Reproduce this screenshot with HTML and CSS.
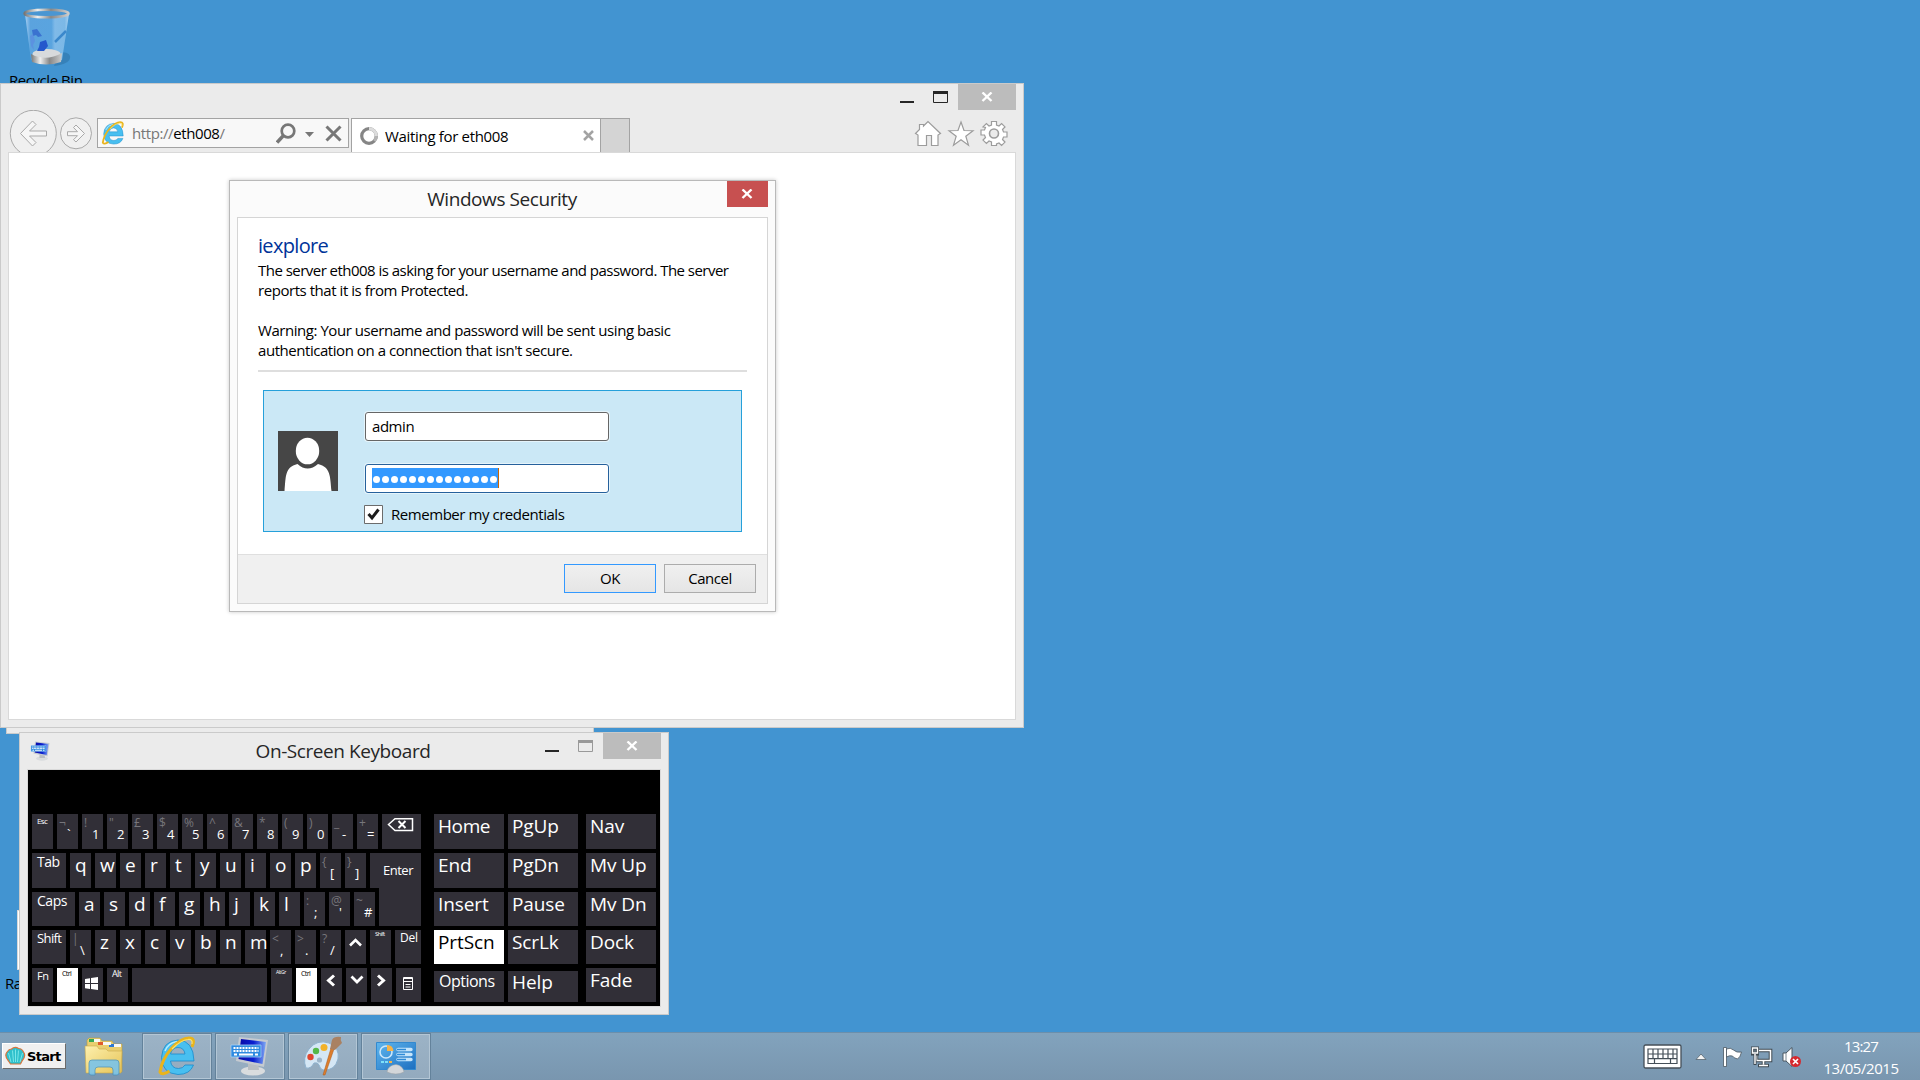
FILE: index.html
```html
<!DOCTYPE html>
<html lang="en">
<head>
<meta charset="utf-8">
<title>Desktop</title>
<link rel="stylesheet" href="styles.css">
</head>
<body>
<main class="desktop">

  <div class="shortcut recycle">
    <svg width="52" height="62" viewBox="0 0 52 62">
      <defs>
        <linearGradient id="rim" x1="0" x2="1"><stop offset="0" stop-color="#777"/><stop offset=".3" stop-color="#eee"/><stop offset=".6" stop-color="#888"/><stop offset="1" stop-color="#ccc"/></linearGradient>
        <linearGradient id="glass" x1="0" x2="1"><stop offset="0" stop-color="#a9d0f2"/><stop offset=".12" stop-color="#5ba3de"/><stop offset=".6" stop-color="#5aa4df"/><stop offset=".68" stop-color="#80bae8"/><stop offset=".9" stop-color="#7bb8e6"/><stop offset="1" stop-color="#a9d2f2"/></linearGradient>
      </defs>
      <path d="M37 47q12 0 11 6t-16 8z" fill="#2f74a8" opacity=".6"/>
      <path d="M3 9l6 46q15 7 31 0L47 9z" fill="url(#glass)"/>
      <ellipse cx="24.500" cy="49" rx="14" ry="5" fill="#d8dadc"/>
      <path d="M9 49q15 8 31-1l-1 9q-15 5-29 0z" fill="url(#rim)"/>
      <path d="M10 25l5-1 5 7-4 1-2-2-3 1z" fill="#3a72d0"/>
      <path d="M8 31l3-2 2 7-2 4 1 5-3-4z" fill="#5b8de0" opacity=".8"/>
      <path d="M18 37l6-2 2 6-4 5h-7l2-4z" fill="#2458cc"/>
      <path d="M33 37l11-11" stroke="#3b88cc" stroke-width="2.500"/>
      <ellipse cx="24.500" cy="8.500" rx="22" ry="3.800" fill="#4a96d2" stroke="url(#rim)" stroke-width="2.500"/>
    </svg>
    <span>Recycle Bin</span>
  </div>

  <div class="shortcut second"><i></i><span>Ra</span></div>

  <div class="window backdrop"></div>

  <section class="window ie">
    <header class="caption">
      <svg class="cap-btn" width="58" height="26"><path d="M7 17h14v2H7z" fill="#262626"/></svg>
      <svg class="cap-max" width="22" height="26"><path d="M.5 7.500h14v11H.5z" fill="none" stroke="#262626"/><path d="M0 7h15v3H0z" fill="#262626"/></svg>
      <div class="close"><svg width="12" height="10"><path d="M1.500.5l9 8.500M10.500.5l-9 8.500" stroke="#fff" stroke-width="2.400"/></svg></div>
    </header>
    <nav class="toolbar">
      <svg class="nav" width="88" height="42" fill="#f0f0f0" stroke="#a9a9a9">
        <circle cx="25.300" cy="23.300" r="23"/>
        <circle cx="68" cy="23.300" r="15.500"/>
        <path d="M12.500 23.500L24.500 11l3.500 3.500-6.500 6.500H38.500v5H21.500l6.500 6.500-3.500 3.500z" fill="#f6f6f6"/>
        <path d="M76.500 23.500L68 15l-2.500 2.500 4 4.200H59.500v4H69.500l-4 4L68 32z" fill="#f6f6f6"/>
      </svg>
      <div class="address">
        <svg width="24" height="26" viewBox="0 0 40 40" class="e-small"><use href="#ie-logo"/></svg>
        <span class="url">http://<b>eth008</b>/</span>
        <svg width="70" height="28" class="addr-icons">
          <circle cx="12" cy="12" r="6.300" fill="none" stroke="#777" stroke-width="2.700"/>
          <path d="M7.500 16.500L1 23.500" stroke="#777" stroke-width="3.400"/>
          <path d="M29 13h9l-4.500 5z" fill="#777"/>
          <path d="M50.500 7.500l14 14M64.500 7.500l-14 14" stroke="#777" stroke-width="3"/>
        </svg>
      </div>
      <div class="tab">
        <svg width="18" height="18" fill="none" stroke-width="3.200"><circle cx="9" cy="9" r="7.300" stroke="#858585"/><path d="M9 1.700A7.300 7.300 0 0 1 16.300 9" stroke="#dcdcdc"/><path d="M16.300 9a7.300 7.300 0 0 1-2 5" stroke="#b4b4b4"/></svg>
        <span>Waiting for eth008</span>
        <svg width="11" height="11"><path d="M1 1l9 9M10 1l-9 9" stroke="#a3a3a3" stroke-width="2.500"/></svg>
      </div>
      <div class="newtab"></div>
      <svg class="tools" width="94" height="28" fill="#fff" stroke="#9c9c9c" stroke-width="1.200">
        <path d="M1.500 13.500L5.500 9.500V4.500h4v1.500L14 1.500l12.500 12-2.500 1.500V25.500H17.500V15.500h-5v10H4V15z"/>
        <path d="M47 2l3 8.500 9 .2-7.200 5.500 2.700 9L47 19.800l-7.500 5.400 2.700-9L35 10.700l9-.2z"/>
        <path d="M77.500 2h5v3.500l2.500 1 2.600-2.500 3.400 3.400-2.500 2.600 1 2.500H93v5h-3.500l-1 2.500 2.500 2.600-3.400 3.400-2.600-2.500-2.500 1V26h-5v-3.500l-2.500-1-2.600 2.500-3.400-3.400 2.500-2.600-1-2.500H67v-5h3.500l1-2.500L69 7.400 72.400 4 75 6.500l2.500-1z" transform="translate(0 -.5)"/>
        <circle cx="80" cy="13.500" r="4.500" fill="#ebebeb" stroke-width="1.600"/>
      </svg>
    </nav>
    <div class="page"></div>
  </section>

  <section class="window dialog">
    <header class="dialog-head">
      <h1>Windows Security</h1>
      <div class="close red"><svg width="12" height="10"><path d="M1.500.5l9 8.500M10.500.5l-9 8.500" stroke="#fff" stroke-width="2.400"/></svg></div>
    </header>
    <div class="panel">
      <div class="panel-body">
        <h2>iexplore</h2>
        <p class="wide">The server eth008 is asking for your username and password. The server</p>
        <p>reports that it is from Protected.</p>
        <p class="gap">Warning: Your username and password will be sent using basic</p>
        <p>authentication on a connection that isn't secure.</p>
        <div class="rule"></div>
        <div class="card">
          <svg class="avatar" width="60" height="60"><rect width="60" height="60" fill="#464646"/><ellipse cx="29.500" cy="20" rx="11.700" ry="13.300" fill="#fff"/><path d="M6.500 60C8 46 6.500 36 19.500 33q10 9 20.500 0C53 36 52 46 53.500 60z" fill="#fff"/></svg>
          <div class="fields">
            <div class="input">admin</div>
            <div class="input active"><div class="selected"><i></i><i></i><i></i><i></i><i></i><i></i><i></i><i></i><i></i><i></i><i></i><i></i><i></i><i></i></div></div>
            <div class="remember">
              <svg width="19" height="19"><path d="M.5.5h18v18H.5z" fill="#fff" stroke="#6c6c6c"/><path d="M4.500 9l3.500 4 6.500-8.500" fill="none" stroke="#1c1c1c" stroke-width="3"/></svg>
              <span>Remember my credentials</span>
            </div>
          </div>
        </div>
      </div>
      <footer class="panel-foot">
        <div class="button primary">OK</div>
        <div class="button">Cancel</div>
      </footer>
    </div>
  </section>

  <section class="window osk">
    <header class="osk-head">
      <svg class="osk-icon" width="20" height="20" viewBox="0 0 40 40"><use href="#osk-logo"/></svg>
      <h1>On-Screen Keyboard</h1>
      <div class="osk-caps">
        <svg width="58" height="26"><path d="M0 17h14v2H0z" fill="#262626"/><path d="M33.500 7.500h14v11h-14z" fill="none" stroke="#999"/><path d="M33 7h15v3H33z" fill="#999"/></svg>
        <div class="close"><svg width="12" height="10"><path d="M1.500.5l9 8.500M10.500.5l-9 8.500" stroke="#fff" stroke-width="2.400"/></svg></div>
      </div>
    </header>
    <div class="board">
      <div class="keys">
        <div class="row">
          <div class="key esc">Esc</div>
          <div class="key dual"><s>¬</s><u>`</u></div>
          <div class="key dual"><s>!</s><u>1</u></div>
          <div class="key dual"><s>"</s><u>2</u></div>
          <div class="key dual"><s>£</s><u>3</u></div>
          <div class="key dual"><s>$</s><u>4</u></div>
          <div class="key dual"><s>%</s><u>5</u></div>
          <div class="key dual"><s>^</s><u>6</u></div>
          <div class="key dual"><s>&amp;</s><u>7</u></div>
          <div class="key dual"><s>*</s><u>8</u></div>
          <div class="key dual"><s>(</s><u>9</u></div>
          <div class="key dual"><s>)</s><u>0</u></div>
          <div class="key dual"><s>_</s><u>-</u></div>
          <div class="key dual"><s>+</s><u>=</u></div>
          <div class="key art backspace"><svg width="39" height="35" fill="none" stroke="#fff"><path d="M6.500 10.500L13 4.700H30.500v11.800H13z" stroke-width="1.500"/><path d="M16.500 7l7 7M23.500 7l-7 7" stroke-width="2"/></svg></div>
        </div>
        <div class="row">
          <div class="key mod tab-key">Tab</div>
          <div class="key">q</div><div class="key">w</div><div class="key">e</div><div class="key">r</div><div class="key">t</div><div class="key">y</div><div class="key">u</div><div class="key">i</div><div class="key">o</div><div class="key">p</div>
          <div class="key dual"><s>{</s><u>[</u></div>
          <div class="key dual"><s>}</s><u>]</u></div>
          <div class="key enter">Enter</div>
        </div>
        <div class="row low">
          <div class="key mod caps-key">Caps</div>
          <div class="key">a</div><div class="key">s</div><div class="key">d</div><div class="key">f</div><div class="key">g</div><div class="key">h</div><div class="key">j</div><div class="key">k</div><div class="key">l</div>
          <div class="key dual"><s>:</s><u>;</u></div>
          <div class="key dual"><s>@</s><u>'</u></div>
          <div class="key dual"><s>~</s><u>#</u></div>
        </div>
        <div class="row low">
          <div class="key mod shift-key">Shift</div>
          <div class="key dual"><s>|</s><u>\</u></div>
          <div class="key">z</div><div class="key">x</div><div class="key">c</div><div class="key">v</div><div class="key">b</div><div class="key">n</div><div class="key m">m</div>
          <div class="key dual"><s>&lt;</s><u>,</u></div>
          <div class="key dual"><s>&gt;</s><u>.</u></div>
          <div class="key dual"><s>?</s><u>/</u></div>
          <div class="key art"><svg width="21" height="34"><path d="M5 15.500l5.500-5.500 5.500 5.500" fill="none" stroke="#fff" stroke-width="2.600"/></svg></div>
          <div class="key rshift">Shift</div>
          <div class="key mod del">Del</div>
        </div>
        <div class="row low">
          <div class="key fn">Fn</div>
          <div class="key ctrl">Ctrl</div>
          <div class="key art"><svg width="21" height="34" fill="#fff"><path d="M3 11l5-.8V15H3zM9 10l7-1v6H9zM3 16h5v5l-5-.8zM9 16h7v6l-7-1z"/></svg></div>
          <div class="key alt">Alt</div>
          <div class="key space"></div>
          <div class="key altgr">AltGr</div>
          <div class="key ctrl">Ctrl</div>
          <div class="key art"><svg width="21" height="34"><path d="M13 7.500l-5.500 5 5.500 5" fill="none" stroke="#fff" stroke-width="3"/></svg></div>
          <div class="key art"><svg width="21" height="34"><path d="M5.500 8.500L11 14l5.500-5.500" fill="none" stroke="#fff" stroke-width="2.800"/></svg></div>
          <div class="key art"><svg width="21" height="34"><path d="M7 7.500l5.500 5-5.500 5" fill="none" stroke="#fff" stroke-width="3"/></svg></div>
          <div class="key art menu-key"><svg width="25" height="34" fill="none" stroke="#fff"><path d="M7.500 9.500h9v12h-9z"/><path d="M7 10.500h10M7 13.500h10M9.500 16.500h5M9.500 19h5"/></svg></div>
        </div>
      </div>
      <div class="side">
        <div class="key home">Home</div><div class="key">PgUp</div><div class="key">Nav</div>
        <div class="key">End</div><div class="key">PgDn</div><div class="key">Mv Up</div>
        <div class="key">Insert</div><div class="key">Pause</div><div class="key">Mv Dn</div>
        <div class="key lit">PrtScn</div><div class="key">ScrLk</div><div class="key">Dock</div>
        <div class="key short opt">Options</div><div class="key short">Help</div><div class="key">Fade</div>
      </div>
    </div>
  </section>
</main>

<footer class="taskbar">
  <div class="start">
    <svg width="21" height="20"><path d="M3.500 15Q-1 10 2 6 4 3 6.500 3 10 0 13.500 2.500 17 2.500 18.500 6q3 4-1.500 9l-1.500 3h-10z" fill="#2fc0cc" stroke="#d9743c" stroke-width="1.200"/><path d="M6 16L3.500 7M8.500 16L7.500 4.500M10.500 16V3.500M12.500 16l1-11.500M15 16l2.500-9" stroke="#7be6e8" stroke-width="1"/></svg>
    <span>Start</span>
  </div>
  <div class="pinned">
    <svg width="40" height="40">
      <defs><linearGradient id="fold" x1="0" y1="0" x2="1" y2="1"><stop offset="0" stop-color="#fdf0ae"/><stop offset="1" stop-color="#e6c457"/></linearGradient></defs>
      <path d="M3 12V3l2-2h11l2 3h10l2 3h8v28H3z" fill="#e9cf70" stroke="#b99a3f" stroke-width=".6"/>
      <path d="M5 2h5v3H5z" fill="#34a853"/><path d="M14 5h5v3h-5z" fill="#e05a2b"/><path d="M25 7h5v3h-5z" fill="#2b78d4"/><path d="M10 2h6v3h-6zM19 5h8v3h-8zM30 7h7v3h-7z" fill="#f8f8f4"/>
      <path d="M1 9h12l2 3h7l2 2h14l-1 22H2z" fill="url(#fold)" stroke="#c9a94c" stroke-width=".6"/>
      <path d="M5 26q0-3 3-3h24q3 0 3 3v10q0 2-2 2h-4v-5q0-3-3-3H14q-3 0-3 3v5H7q-2 0-2-2z" fill="#7cc4e8" stroke="#4a93bd" stroke-width=".8" opacity=".92"/>
    </svg>
  </div>
  <div class="task"><svg width="40" height="40" viewBox="0 0 40 40">
    <g id="ie-logo">
      <path d="M37 25H13.500q1 7.500 8 7.500 4.500 0 6.500-3.500h8.500Q33 38.500 21 38.500 5 37.500 4.500 21.500 5.500 5 21 4q15.500.5 16 21zM13.500 18H28q-1-6.500-7-6.500T13.500 18z" fill="#48bff0" stroke="#1a8ccb" stroke-width=".8"/>
      <path d="M8 15q3-8 12-9.500" fill="none" stroke="#b6ebff" stroke-width="1.500"/>
      <path d="M35 11q4-9-3-9Q24 2 14.500 12.500T3 36q2 4 9.500-1" fill="none" stroke="#e9b41c" stroke-width="3"/>
      <path d="M35 8q1-5-4-4.500Q24 4 15 13" fill="none" stroke="#fbe36b" stroke-width="1.200"/>
    </g></svg></div>
  <div class="task"><svg width="42" height="40" viewBox="0 0 42 40">
    <defs><linearGradient id="scr" x1="0" x2="1"><stop offset="0" stop-color="#0808a4"/><stop offset=".55" stop-color="#0a20d0"/><stop offset="1" stop-color="#7fa8f4"/></linearGradient></defs>
    <g id="osk-logo">
      <ellipse cx="24" cy="35" rx="12" ry="4.500" fill="#d9dcde"/><path d="M19 25h10l1 9H19z" fill="#b9bec2"/>
      <path d="M10 1l29 3-4 27-28-6z" fill="#c5cad0"/><path d="M12 3l25 3-3.500 22L9.500 23z" fill="url(#scr)"/>
      <path d="M2 9h30v12H2z" fill="#2f8be0" stroke="#a6d0f5" stroke-width=".8"/>
      <path d="M4.500 12h25M4.500 15h25" stroke="#fff" stroke-width="2" stroke-dasharray="2 1"/><path d="M5 18.500h3M10 18.500h14M26 18.500h3" stroke="#fff" stroke-width="1.800"/>
    </g></svg></div>
  <div class="task"><svg width="42" height="40" viewBox="0 0 42 40">
    <path d="M4 32Q0 22 7 13 15 3 27 7q11 5 9 16-3 12-15 11-3-1-4-5-1-3-5-2-3 6-8 5z" fill="#d5e7f5" stroke="#8fb2ce"/>
    <circle cx="8.500" cy="21" r="3.200" fill="#e0462e"/><circle cx="14" cy="15" r="3.200" fill="#55b848"/><circle cx="22" cy="11.500" r="3.500" fill="#f2b22a"/><circle cx="17.500" cy="24" r="2.600" fill="#9db5c9"/>
    <path d="M21 39l8-27 3 1-9 26z" fill="#dd7e2d" stroke="#a9581b" stroke-width=".5"/><path d="M28 13l2-9q2-4 9-3-1 3 1 6-3 3-7 7z" fill="#a98162"/></svg></div>
  <div class="task"><svg width="42" height="40" viewBox="0 0 42 40">
    <defs><linearGradient id="cp" x1="0" y1="0" x2="1" y2="1"><stop offset="0" stop-color="#5fb6ee"/><stop offset="1" stop-color="#1d6fc0"/></linearGradient></defs>
    <path d="M1.500 6.500h39v27h-39z" fill="url(#cp)" stroke="#3389cf"/>
    <circle cx="11" cy="16" r="6" fill="none" stroke="#cde8fb" stroke-width="1.600"/><path d="M12 15V9q6 0 6.500 6z" fill="#f7b347"/>
    <path d="M23 13.500h13M23 18.500h13M23 23.500h13" stroke="#c5e5fb" stroke-width="3.400" stroke-linecap="round"/><path d="M22 13.500h9M22 18.500h8M22 23.500h9" stroke="#2d8bd8" stroke-width="1.600"/>
    <path d="M6 26h3M10 26h3" stroke="#7ee0f8" stroke-width="2"/><path d="M14 26h3" stroke="#f7b347" stroke-width="2"/>
    <path d="M12 36q1-7 9-7.500 7 1 8 7.500-8 4-17 0z" fill="#d3d6d9" stroke="#9aa0a5" stroke-width=".5"/></svg></div>

  <div class="tray">
    <svg class="kb" width="40" height="26"><rect x="1" y="1" width="37" height="23" rx="1.500" fill="#fff" stroke="#454f58" stroke-width="1.300"/><path d="M5 5h29v14.500H5zM5 10h29M5 14.700h29M10 5v9.700M15 5v9.700M20 5v9.700M25 5v9.700M30 5v9.700M11.500 14.700v5M27.500 14.700v5" fill="none" stroke="#454f58" stroke-width="1.200"/></svg>
    <svg class="up" width="12" height="8"><path d="M1 6.500L6 1l5 5.500z" fill="#f4f4f4" stroke="#56646f" stroke-width=".8"/></svg>
    <svg class="flag" width="21" height="22"><path d="M1.500 1.500h3v19h-3z" fill="#fff" stroke="#4a5761" stroke-width=".8"/><path d="M4.500 3q4-2 7 1t8 2q-1 5-4 7-4-1-5-3-3-1-6 1z" fill="#fff" stroke="#4a5761" stroke-width=".8"/></svg>
    <svg class="net" width="22" height="22" fill="none"><path d="M5.500 4.500h14v10h-14zM12.500 14.500v4M7 19.500h11" stroke="#3e4951" stroke-width="3.600"/><path d="M5.500 4.500h14v10h-14zM12.500 14.500v4M8 19.500h9" stroke="#fff" stroke-width="1.600"/><path d="M1.500 2h5v6h-5zM4 8v11" fill="#5d6e7b" stroke="#3e4951" stroke-width="3"/><path d="M1.500 2h5v5h-5zM4 8v10" stroke="#fff" stroke-width="1.400"/></svg>
    <svg class="vol" width="20" height="22"><path d="M1 7h3l6-5.500v19L4 15H1z" fill="#fff" stroke="#4a5761"/><path d="M4 7v8" stroke="#7b8790"/><circle cx="13.500" cy="15.500" r="5.500" fill="#d5292e"/><path d="M11 13l5 5M16 13l-5 5" stroke="#fff" stroke-width="1.700"/></svg>
    <div class="clock"><span class="time">13:27</span><span>13/05/2015</span></div>
  </div>
</footer>
</body>
</html>
```
FILE: styles.css
```css
* { box-sizing: border-box; }
body {
  margin: 0;
  width: 1920px;
  height: 1080px;
  overflow: hidden;
  display: flex;
  flex-direction: column;
  background: #4294d1;
  font: 15px/20px "Open Sans", "Noto Sans", sans-serif;
  letter-spacing: -0.45px;
  color: #000;
}
svg { display: block; flex: none; }
h1, h2, p { margin: 0; font-weight: 400; }

.desktop { position: relative; height: 1032px; }

/* desktop icons */
.shortcut { position: absolute; white-space: nowrap; }
.recycle { left: 9px; top: 5px; }
.recycle svg { margin-left: 13px; }
.recycle span { display: block; margin-top: 3px; }
.second { left: 5px; top: 910px; }
.second i { display: block; width: 20px; height: 60px; margin: 0 0 3px 12px; background: #fff; border: 1px solid #d8d8d8; }

/* windows */
.window { position: absolute; background: #ebebeb; border: 1px solid #cacaca; }
.backdrop { left: 6px; top: 700px; width: 588px; height: 34px; }
.close { width: 58px; height: 26px; padding-right: 1px; background: #bcbcbc; display: flex; justify-content: center; align-items: center; }
.close.red { width: 41px; background: #c75050; }

.ie { left: 0; top: 83px; width: 1024px; height: 645px; padding: 0 7px 7px; display: flex; flex-direction: column; }
.caption { display: flex; justify-content: flex-end; height: 26px; }
.cap-btn { margin-right: -18px; }
.cap-max { margin-right: 3px; }
.toolbar { display: flex; height: 42px; overflow: hidden; }
.address {
  display: flex;
  width: 252px;
  height: 30px;
  margin: 8px 2px 0 1px;
  padding-left: 3px;
  border: 1px solid #a3a3a3;
  background: #f8f8f8;
}
.e-small { margin-top: 1px; }
.url { width: 151px; padding-left: 7px; line-height: 29px; color: #777; letter-spacing: -0.4px; }
.url b { font-weight: 400; color: #000; }
.tab {
  display: flex;
  align-items: center;
  width: 250px;
  height: 34px;
  margin-top: 8px;
  padding: 0 6px 0 8px;
  border: 1px solid #a3a3a3;
  border-bottom: 0;
  background: #fff;
}
.tab span { flex: 1; padding-left: 7px; letter-spacing: -0.32px; }
.newtab { width: 29px; height: 34px; margin-top: 8px; border: 1px solid #a3a3a3; border-width: 1px 1px 0 0; background: #d4d4d4; }
.tools { margin: 10px 8px 0 auto; }
.page { flex: 1; border: 1px solid #d9d9d9; background: #fff; }

.dialog {
  left: 229px;
  top: 180px;
  width: 547px;
  height: 432px;
  padding: 0 7px 7px;
  display: flex;
  flex-direction: column;
  background: #fbfbfb;
  border-color: #b9b9b9;
  box-shadow: 0 0 4px rgba(0, 0, 0, .22);
}
.dialog-head { display: flex; height: 36px; }
.dialog-head h1 { flex: 1; padding: 5px 0 0 40px; text-align: center; letter-spacing: -0.43px; }
h1 { font-size: 19px; line-height: 26px; letter-spacing: -0.5px; color: #262626; }
.panel { flex: 1; display: flex; flex-direction: column; border: 1px solid #d5d5d5; background: #fff; }
.panel-body { height: 336px; padding: 16px 20px 0; }
h2 { height: 26px; font-size: 20px; line-height: 24px; letter-spacing: -0.68px; color: #003399; }
p { white-space: nowrap; }
.wide { letter-spacing: -0.53px; }
.gap { margin-top: 20px; }
.rule { height: 2px; margin-top: 10px; background: #dedede; }
.card { display: flex; width: 479px; height: 142px; margin: 18px 0 0 5px; border: 1px solid #26a0da; background: #cbe8f6; }
.avatar { margin: 40px 0 0 14px; }
.fields { padding: 21px 0 0 25px; }
.input {
  width: 244px;
  height: 29px;
  margin: 0 0 23px 2px;
  padding: 3px 6px;
  border: 1px solid #666;
  border-radius: 3px;
  background: #fff;
  box-shadow: 0 0 0 1px rgba(255, 255, 255, .5);
}
.input.active { margin-bottom: 12px; border-color: #26619c; }
.selected { display: flex; align-items: center; gap: 2px; width: 127px; height: 20px; padding: 3px 0 0 1px; background: #3399ff; border-right: 1px solid #cc6600; }
.selected i { width: 7px; height: 7px; border-radius: 50%; background: #fff; }
.remember { display: flex; gap: 8px; padding-left: 1px; }
.remember span { line-height: 18px; }
.panel-foot { flex: 1; display: flex; justify-content: flex-end; gap: 8px; padding: 9px 11px 0; border-top: 1px solid #dfdfdf; background: #f0f0f0; }
.button { width: 92px; height: 29px; border: 1px solid #acacac; background: linear-gradient(#f0f0f0, #e5e5e5); text-align: center; line-height: 27px; }
.button.primary { border-color: #3399ff; }

/* on-screen keyboard */
.osk { left: 19px; top: 732px; width: 650px; height: 283px; padding: 0 7px 7px; display: flex; flex-direction: column; }
.osk-head { display: flex; justify-content: space-between; height: 36px; }
.osk-icon { margin: 8px 0 0 3px; }
.osk-head h1 { padding: 5px 0 0 91px; letter-spacing: -0.43px; }
.osk-caps { display: flex; }
.board { flex: 1; display: flex; justify-content: space-between; padding: 44px 4px 0; border: 1px solid #d9d9d9; background: #000; }
.keys { display: flex; flex-direction: column; gap: 4px; }
.row { display: flex; gap: 4px; height: 35px; }
.row.low { height: 34px; }
.key { width: 21px; padding-left: 5px; background: #312f37; color: #fff; font-size: 19px; line-height: 24px; white-space: nowrap; }
.key.m { letter-spacing: -1px; }
.key.art { padding: 0; }
.dual { display: flex; flex-direction: column; padding-left: 2px; font-size: 13px; line-height: 18px; }
.dual s, .dual u { text-decoration: none; height: 18px; }
.dual s { color: #77767b; font-size: 12px; }
.dual u { margin-top: -7px; padding-left: 8px; }
.esc { font-size: 8px; line-height: 13px; letter-spacing: -0.6px; }
.backspace { width: 39px; }
.mod { width: 34px; font-size: 14px; line-height: 18px; }
.caps-key { width: 43px; }
.shift-key { font-size: 13px; line-height: 17px; letter-spacing: -0.6px; }
.del { width: 26px; font-size: 12px; line-height: 16px; letter-spacing: -0.2px; }
.enter { width: 51px; height: 73px; padding: 8px 0 0 13px; font-size: 13px; line-height: 18px; letter-spacing: -0.5px; clip-path: polygon(0 0, 100% 0, 100% 100%, 9px 100%, 9px 35px, 0 35px); }
.rshift { font-size: 6px; line-height: 9px; letter-spacing: -0.6px; }
.fn { font-size: 11px; line-height: 15px; }
.alt { font-size: 9px; line-height: 12px; letter-spacing: -0.6px; }
.ctrl { background: #fff; color: #000; font-size: 7px; line-height: 11px; letter-spacing: -0.6px; }
.altgr { font-size: 5px; line-height: 8px; letter-spacing: -0.4px; }
.space { width: 135px; }
.menu-key { width: 25px; }
.side { display: grid; grid-template-columns: 70px 74px 70px; grid-template-rows: 35px 35px 34px 34px 34px; gap: 4px; }
.side .key { width: 70px; padding-left: 4px; letter-spacing: -0.1px; }
.side .home { letter-spacing: -0.4px; }
.side .lit { background: #fff; color: #000; }
.side .short { height: 31px; margin-top: 3px; line-height: 22px; }
.side .opt { padding-left: 5px; font-size: 16px; line-height: 21px; letter-spacing: -0.5px; }

/* taskbar */
.taskbar { display: flex; height: 48px; border-top: 1px solid #6c8fab; background: linear-gradient(#82a3bd, #7996af); }
.start {
  display: flex;
  align-items: center;
  width: 64px;
  height: 26px;
  margin: 10px 17px 0 2px;
  padding-left: 2px;
  background: #f0f0f0;
  border: 1px solid #fff;
  border-right-color: #6b6b6b;
  border-bottom-color: #6b6b6b;
  font: bold 13px/20px "DejaVu Sans", sans-serif;
  letter-spacing: -0.7px;
}
.start span { padding: 1px 0 0 1px; }
.pinned { width: 59px; padding: 4px 0 0 1px; }
.task {
  width: 70px;
  height: 47px;
  margin-right: 3px;
  display: flex;
  justify-content: center;
  padding-top: 2px;
  border: 1px solid #63829b;
  box-shadow: inset 0 0 0 1px #b3c6d5;
  background: linear-gradient(#9cb3c6, #93aabe);
}
.tray { display: flex; margin-left: auto; }
.kb { margin-top: 11px; }
.up { margin: 20px 0 0 12px; }
.flag { margin: 13px 0 0 15px; }
.net { margin: 13px 0 0 8px; }
.vol { margin: 13px 0 0 9px; }
.clock { width: 118px; padding-top: 2px; display: flex; flex-direction: column; align-items: center; line-height: 22px; color: #fff; }
.time { letter-spacing: -0.85px; }
```
